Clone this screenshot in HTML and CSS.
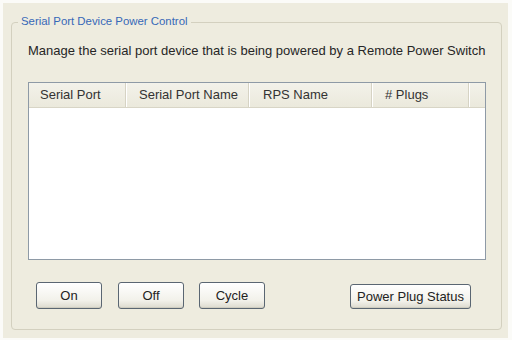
FILE: index.html
```html
<!DOCTYPE html>
<html>
<head>
<meta charset="utf-8">
<link rel="stylesheet" href="styles.css">
</head>
<body>
<div class="panel">
  <div class="group">
    <div class="legend">Serial Port Device Power Control</div>
    <p class="desc">Manage the serial port device that is being powered by a Remote Power Switch</p>
    <div class="list">
      <div class="head">
        <div class="col c1">Serial Port</div>
        <div class="col c2">Serial Port Name</div>
        <div class="col c3">RPS Name</div>
        <div class="col c4"># Plugs</div>
        <div class="col c5"></div>
      </div>
      <div class="rows"></div>
    </div>
    <div class="buttons">
      <button class="btn">On</button>
      <button class="btn">Off</button>
      <button class="btn">Cycle</button>
      <span class="spacer"></span>
      <button class="btn wide">Power Plug Status</button>
    </div>
  </div>
</div>
</body>
</html>
```

FILE: styles.css
```css
html, body {
  margin: 0;
  padding: 0;
  background: #fbfbf8;
  width: 512px;
  height: 340px;
  overflow: hidden;
  font-family: "Liberation Sans", Arial, sans-serif;
  font-size: 13px;
  color: #262626;
}
.panel {
  margin: 3px 4px 0 3px;
  height: 335px;
  background: #eeecdf;
  padding: 19px 0 0 8px;
  box-sizing: border-box;
}
.group {
  position: relative;
  width: 491px;
  height: 308px;
  box-sizing: border-box;
  border: 1px solid #d3d0bf;
  border-radius: 4px;
  padding: 20px 15px 0 16px;
  display: flex;
  flex-direction: column;
}
.legend {
  position: absolute;
  left: 6px;
  top: -10px;
  padding: 0 3px;
  background: #eeecdf;
  color: #3668b8;
  line-height: 16px;
  font-size: 11.4px;
}
.desc {
  margin: 0;
  line-height: 16px;
  white-space: nowrap;
}
.list {
  margin-top: 23px;
  height: 178px;
  box-sizing: border-box;
  border: 1px solid #8e9aa6;
  background: #fff;
  display: flex;
  flex-direction: column;
}
.head {
  height: 25px;
  display: flex;
  background: linear-gradient(#f3f2ea, #ebe9dc);
  border-bottom: 1px solid #d8d5c6;
  box-sizing: border-box;
}
.col {
  line-height: 24px;
  box-sizing: border-box;
  border-right: 1px solid #d6d3c4;
  box-shadow: 1px 0 0 #fff;
  color: #333;
  white-space: nowrap;
}
.c1 { width: 97px; padding-left: 11px; }
.c2 { width: 123px; padding-left: 13px; }
.c3 { width: 123px; padding-left: 14px; }
.c4 { width: 97px; padding-left: 13px; }
.c5 { flex: 1; border-right: none; box-shadow: none; }
.rows { flex: 1; }
.buttons {
  margin-top: 22px;
  padding-left: 8px;
  padding-right: 15px;
  display: flex;
  align-items: flex-start;
}
.btn {
  height: 27px;
  width: 66px;
  margin: 0 16px 0 0;
  padding: 0;
  font-family: "Liberation Sans", Arial, sans-serif;
  font-size: 13px;
  color: #222;
  border: 1px solid #5a6672;
  border-radius: 3px;
  background: linear-gradient(#ffffff, #f2f1ea 70%, #dcdace);
  box-shadow: inset 0 -1px 0 #cfcdc0;
}
.btn:nth-child(2) { margin-right: 15px; }
.spacer { flex: 1; }
.btn.wide {
  width: 121px;
  margin: 2px 0 0 0;
  height: 25px;
}
```
